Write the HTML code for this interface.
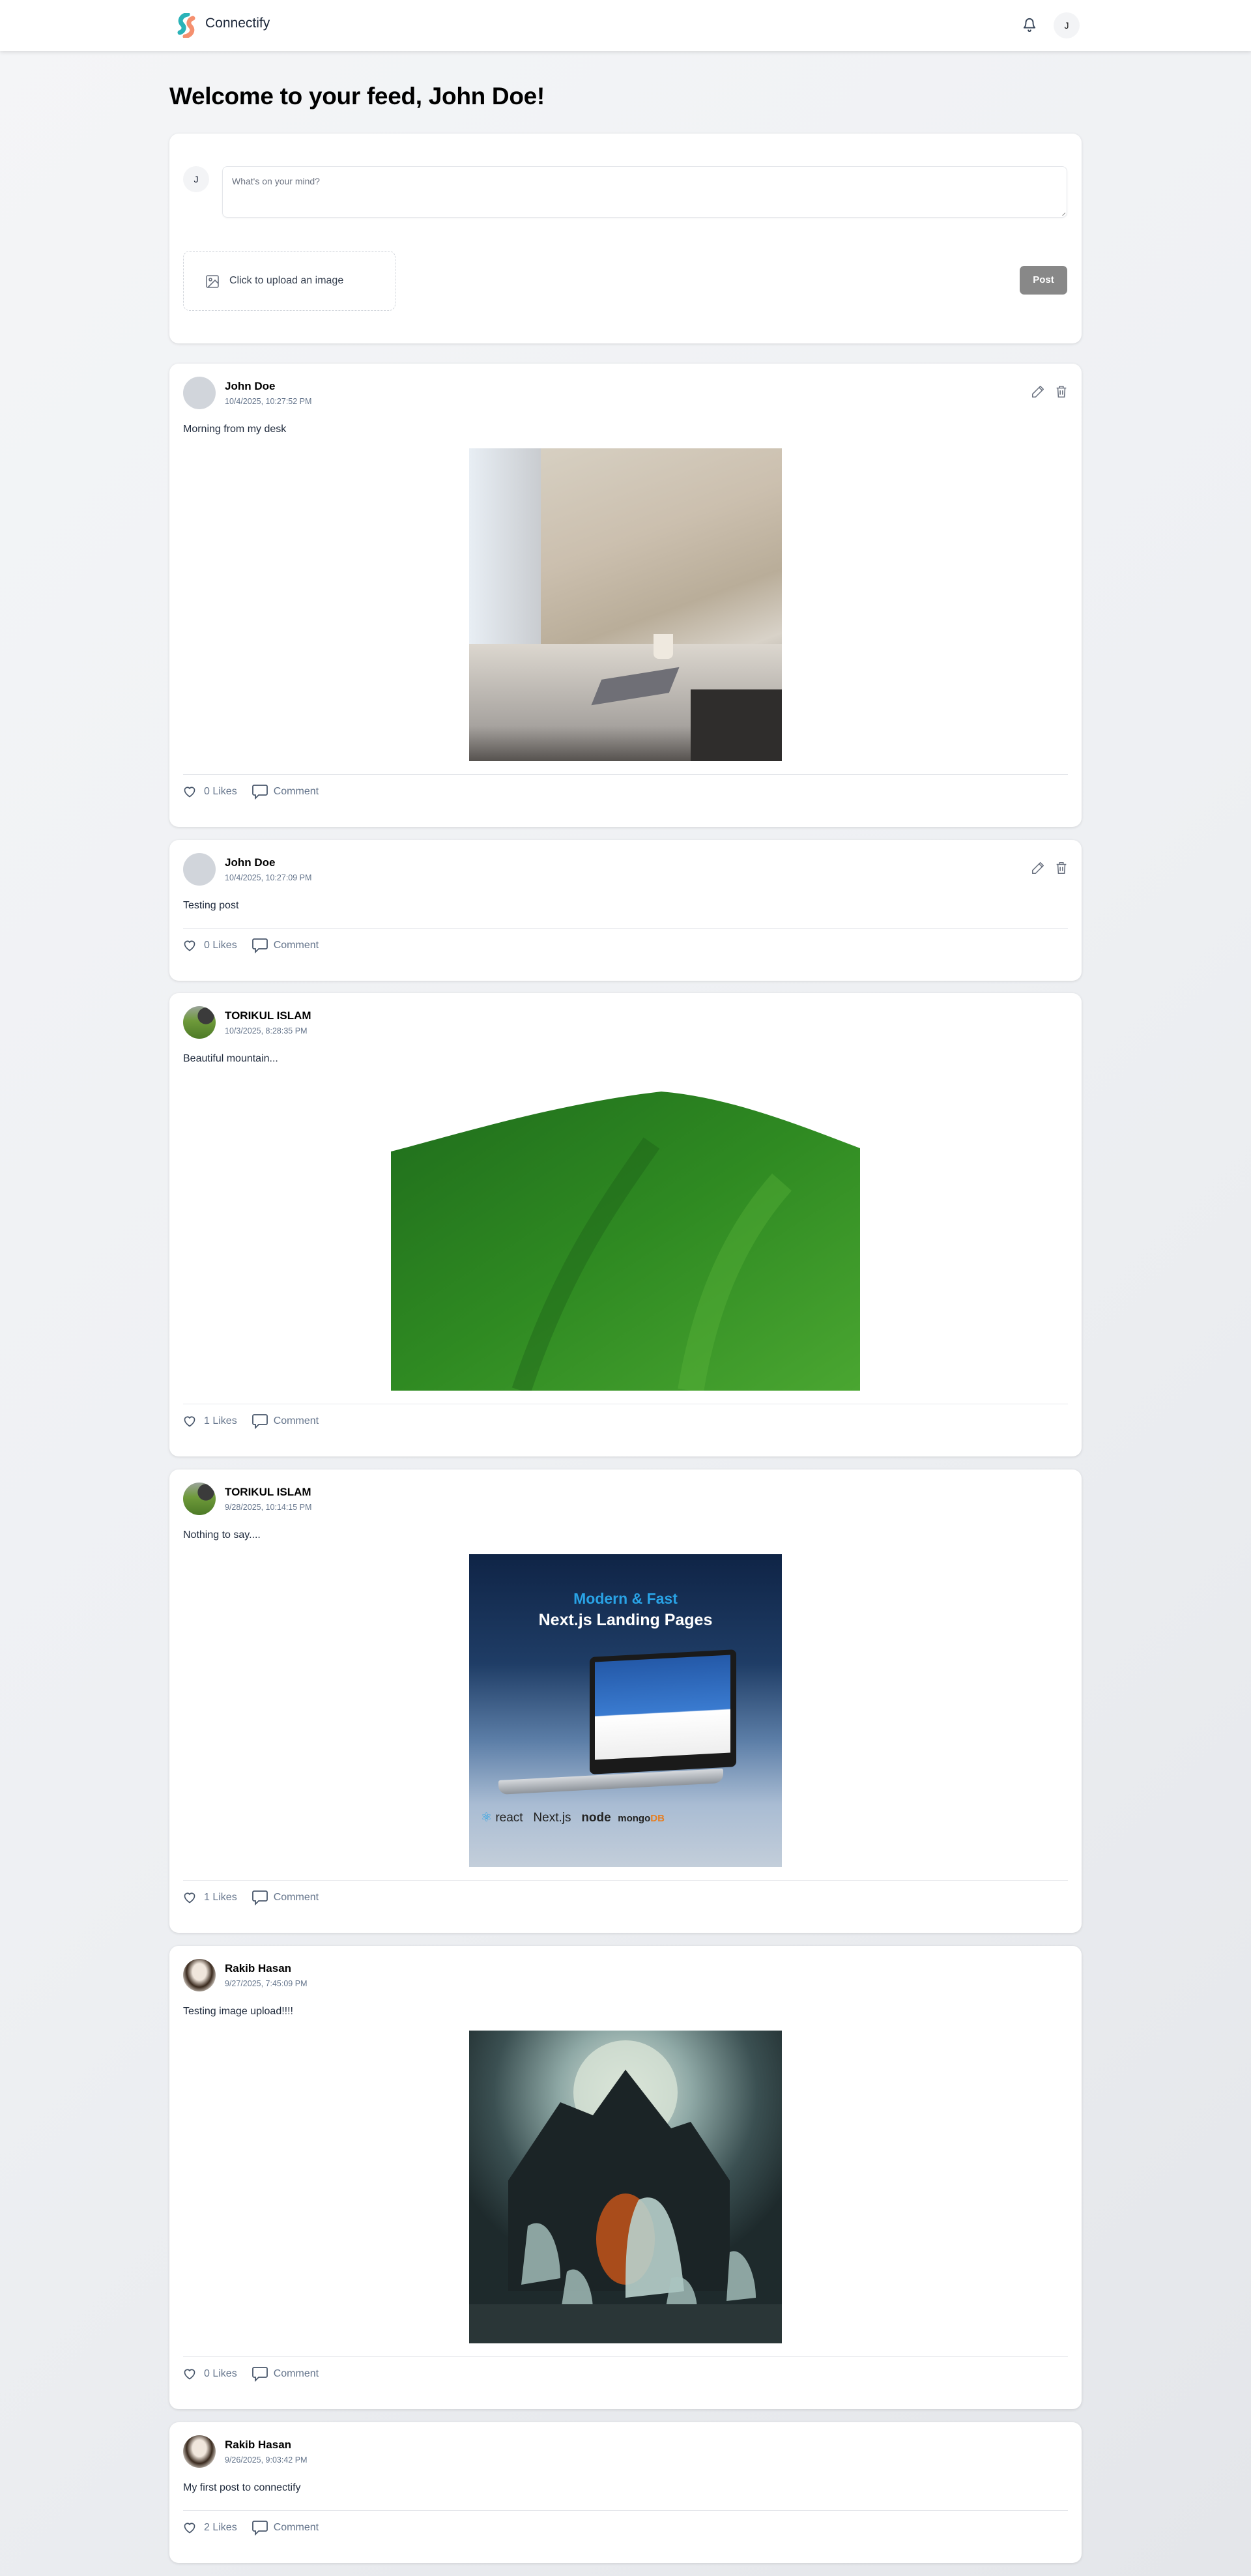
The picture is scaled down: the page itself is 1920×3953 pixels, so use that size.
<!DOCTYPE html>
<html><head><meta charset="utf-8">
<style>
*{box-sizing:border-box;margin:0;padding:0}
html,body{width:1920px;height:3953px;overflow:hidden}
body{font-family:"Segoe UI","Liberation Sans",sans-serif;background:linear-gradient(135deg,#f4f5f7 0%,#eef0f3 50%,#e4e6ea 100%);position:relative;color:#0f172a}
.nav{position:absolute;left:0;top:0;width:1920px;height:78px;background:#fff;box-shadow:0 2px 6px rgba(0,0,0,.12)}
.abs{position:absolute}
.card{position:absolute;left:260px;width:1400px;background:#fff;border-radius:14px;box-shadow:0 1px 4px rgba(0,0,0,.12)}
.av{position:absolute;left:21px;top:20px;width:50px;height:50px;border-radius:50%;background:#d1d5db;overflow:hidden}
.name{position:absolute;left:85px;top:25px;font-size:17px;font-weight:bold;color:#000}
.date{position:absolute;left:85px;top:51px;font-size:12.5px;color:#64748b}
.txt{position:absolute;left:21px;top:89px;font-size:16px;line-height:24px;color:#1e293b}
.img{position:absolute;top:130px;overflow:hidden}
.foot{position:absolute;left:21px;right:21px;border-top:1px solid #e5e7eb;height:60px}
.foot .r{position:absolute;top:14px;left:0;height:24px;display:flex;align-items:center;font-size:16px;color:#64748b}
.icons{position:absolute;right:20px;top:32px;display:flex;gap:14px}
</style></head><body>

<div class="nav">
  <svg class="abs" style="left:270px;top:20px" width="32" height="38" viewBox="0 0 32 38">
    <path d="M18 2 C8 4 4 12 10 18 C14 22 12 28 6 30" stroke="#2bb3b8" stroke-width="7" fill="none" stroke-linecap="round"/>
    <path d="M14 36 C24 34 28 26 22 20 C18 16 20 10 26 8" stroke="#f4845f" stroke-width="7" fill="none" stroke-linecap="round" opacity=".9"/>
  </svg>
  <div class="abs" style="left:315px;top:24px;font-size:21px;color:#1e293b">Connectify</div>
  <svg class="abs" style="left:1569px;top:25px" width="22" height="26" viewBox="0 0 24 26" fill="none" stroke="#334155" stroke-width="2" stroke-linecap="round" stroke-linejoin="round"><path d="M6 9a6 6 0 0 1 12 0c0 7 3 9 3 9H3s3-2 3-9"/><path d="M10 22a2 2 0 0 0 4 0"/></svg>
  <div class="abs" style="left:1617px;top:19px;width:40px;height:40px;border-radius:50%;background:#f3f4f6;text-align:center;line-height:40px;font-size:14px;color:#111">J</div>
</div>

<div class="abs" style="left:260px;top:127px;font-size:37px;font-weight:bold;color:#000;letter-spacing:-0.3px">Welcome to your feed, John Doe!</div>

<div class="card" style="top:205px;height:322px">
  <div class="abs" style="left:21px;top:50px;width:40px;height:40px;border-radius:50%;background:#f3f4f6;text-align:center;line-height:40px;font-size:14px">J</div>
  <div class="abs" style="left:81px;top:50px;width:1297px;height:79px;border:1px solid #e5e7eb;border-radius:8px;box-shadow:0 1px 2px rgba(0,0,0,.05)">
    <div class="abs" style="left:14px;top:14px;font-size:14px;color:#6b7280">What's on your mind?</div>
    <div class="abs" style="right:3px;bottom:3px;width:6px;height:6px;border-right:1px solid #888;transform:rotate(45deg)"></div>
  </div>
  <div class="abs" style="left:21px;top:180px;width:326px;height:92px;border:1.5px dashed #d1d5db;border-radius:10px">
    <svg class="abs" style="left:32px;top:34px" width="24" height="24" viewBox="0 0 24 24" fill="none" stroke="#6b7280" stroke-width="1.6"><rect x="3" y="3" width="18" height="18" rx="2"/><circle cx="9" cy="9" r="2"/><path d="M21 15l-5-5L5 21"/></svg>
    <div class="abs" style="left:70px;top:36px;font-size:16px;color:#374151;font-weight:500">Click to upload an image</div>
  </div>
  <div class="abs" style="left:1305px;top:203px;width:73px;height:44px;border-radius:7px;background:#888;color:#fff;font-weight:bold;font-size:15px;text-align:center;line-height:44px">Post</div>
</div>

<!-- Post 1 -->
<div class="card" style="top:558px;height:711px">
  <div class="av"></div>
  <div class="name">John Doe</div><div class="date">10/4/2025, 10:27:52 PM</div>
  <div class="icons"><svg width="22" height="22" viewBox="0 0 24 24" fill="none" stroke="#6b7280" stroke-width="1.7" stroke-linejoin="round"><path d="M16 3l5 5L8 21H3v-5z"/><path d="M14 5l5 5"/></svg><svg width="22" height="22" viewBox="0 0 24 24" fill="none" stroke="#6b7280" stroke-width="1.7"><path d="M4 6h16M9 6V3h6v3M6 6l1 15h10l1-15M10 10v7M14 10v7"/></svg></div>
  <div class="txt">Morning from my desk</div>
  <div class="img" style="left:460px;width:480px;height:480px;background:linear-gradient(160deg,#d9d3c6 0%,#cbbfae 35%,#b9ad99 55%,#d8d2c8 70%,#6e6a66 100%)">
    <div class="abs" style="left:0;top:0;width:110px;height:300px;background:linear-gradient(90deg,#e8eef4,#c9ccd0)"></div>
    <div class="abs" style="left:0;top:300px;width:480px;height:180px;background:linear-gradient(180deg,#dcd7cf,#a7a39f 70%,#56524f)"></div>
    <div class="abs" style="right:0;top:370px;width:140px;height:110px;background:#2f2d2c"></div>
    <div class="abs" style="left:200px;top:345px;width:110px;height:40px;background:#6f6f76;transform:skew(-30deg) rotate(-10deg)"></div>
    <div class="abs" style="left:283px;top:285px;width:30px;height:38px;background:#efe9df;border-radius:0 0 8px 8px"></div>
  </div>
  <div class="foot" style="top:630px"><div class="r">
    <svg width="20" height="20" viewBox="0 0 24 24" fill="none" stroke="#475569" stroke-width="2"><path d="M12 21s-9-5.5-9-12a5 5 0 0 1 9-3 5 5 0 0 1 9 3c0 6.5-9 12-9 12z"/></svg>
    <span style="margin-left:12px">0 Likes</span>
    <svg style="margin-left:22px" width="26" height="24" viewBox="0 0 26 24" fill="none" stroke="#475569" stroke-width="1.8"><path d="M4 2h18a2 2 0 0 1 2 2v11a2 2 0 0 1-2 2H11l-5 5v-5H4a2 2 0 0 1-2-2V4a2 2 0 0 1 2-2z"/></svg>
    <span style="margin-left:8px">Comment</span></div></div>
</div>

<!-- Post 2 -->
<div class="card" style="top:1289px;height:216px">
  <div class="av"></div>
  <div class="name">John Doe</div><div class="date">10/4/2025, 10:27:09 PM</div>
  <div class="icons"><svg width="22" height="22" viewBox="0 0 24 24" fill="none" stroke="#6b7280" stroke-width="1.7" stroke-linejoin="round"><path d="M16 3l5 5L8 21H3v-5z"/><path d="M14 5l5 5"/></svg><svg width="22" height="22" viewBox="0 0 24 24" fill="none" stroke="#6b7280" stroke-width="1.7"><path d="M4 6h16M9 6V3h6v3M6 6l1 15h10l1-15M10 10v7M14 10v7"/></svg></div>
  <div class="txt">Testing post</div>
  <div class="foot" style="top:135px"><div class="r">
    <svg width="20" height="20" viewBox="0 0 24 24" fill="none" stroke="#475569" stroke-width="2"><path d="M12 21s-9-5.5-9-12a5 5 0 0 1 9-3 5 5 0 0 1 9 3c0 6.5-9 12-9 12z"/></svg>
    <span style="margin-left:12px">0 Likes</span>
    <svg style="margin-left:22px" width="26" height="24" viewBox="0 0 26 24" fill="none" stroke="#475569" stroke-width="1.8"><path d="M4 2h18a2 2 0 0 1 2 2v11a2 2 0 0 1-2 2H11l-5 5v-5H4a2 2 0 0 1-2-2V4a2 2 0 0 1 2-2z"/></svg>
    <span style="margin-left:8px">Comment</span></div></div>
</div>

<!-- Post 3 -->
<div class="card" style="top:1524px;height:711px">
  <div class="av" style="background:radial-gradient(circle at 70% 30%,#3b3b3b 0 25%,transparent 26%),linear-gradient(180deg,#9aa39a 0%,#6e9a3a 45%,#4d7a27 100%)"></div>
  <div class="name">TORIKUL ISLAM</div><div class="date">10/3/2025, 8:28:35 PM</div>
  <div class="txt">Beautiful mountain...</div>
  <svg class="img" style="left:340px" width="720" height="480" viewBox="0 0 720 480">
    <defs><linearGradient id="g1" x1="0" y1="0" x2="1" y2="1"><stop offset="0" stop-color="#1f6d1c"/><stop offset=".5" stop-color="#2f8a22"/><stop offset="1" stop-color="#4aa631"/></linearGradient></defs>
    <path d="M0 113 C90 90 250 40 415 21 C520 30 620 70 720 108 L720 480 L0 480Z" fill="url(#g1)"/>
    <path d="M200 480 C260 300 330 200 400 100" stroke="#1b5a18" stroke-width="30" fill="none" opacity=".35"/>
    <path d="M460 480 C480 360 520 250 600 160" stroke="#5fb83c" stroke-width="40" fill="none" opacity=".35"/>
  </svg>
  <div class="foot" style="top:630px"><div class="r">
    <svg width="20" height="20" viewBox="0 0 24 24" fill="none" stroke="#475569" stroke-width="2"><path d="M12 21s-9-5.5-9-12a5 5 0 0 1 9-3 5 5 0 0 1 9 3c0 6.5-9 12-9 12z"/></svg>
    <span style="margin-left:12px">1 Likes</span>
    <svg style="margin-left:22px" width="26" height="24" viewBox="0 0 26 24" fill="none" stroke="#475569" stroke-width="1.8"><path d="M4 2h18a2 2 0 0 1 2 2v11a2 2 0 0 1-2 2H11l-5 5v-5H4a2 2 0 0 1-2-2V4a2 2 0 0 1 2-2z"/></svg>
    <span style="margin-left:8px">Comment</span></div></div>
</div>

<!-- Post 4 -->
<div class="card" style="top:2255px;height:711px">
  <div class="av" style="background:radial-gradient(circle at 70% 30%,#3b3b3b 0 25%,transparent 26%),linear-gradient(180deg,#9aa39a 0%,#6e9a3a 45%,#4d7a27 100%)"></div>
  <div class="name">TORIKUL ISLAM</div><div class="date">9/28/2025, 10:14:15 PM</div>
  <div class="txt">Nothing to say....</div>
  <div class="img" style="left:460px;width:480px;height:480px;background:linear-gradient(180deg,#0f2446 0%,#1f3d66 35%,#5d7fa8 60%,#a9bcd3 80%,#c3ceda 100%)">
    <div class="abs" style="left:0;width:480px;top:55px;text-align:center;font-family:'Liberation Sans',sans-serif;font-weight:bold;font-size:23px;color:#29a3e6">Modern &amp; Fast</div>
    <div class="abs" style="left:0;width:480px;top:87px;text-align:center;font-family:'Liberation Sans',sans-serif;font-weight:bold;font-size:25px;color:#fff">Next.js Landing Pages</div>
    <div class="abs" style="left:185px;top:152px;width:225px;height:180px;background:#1a1a1a;border-radius:8px;transform:skewY(-3deg)"></div>
    <div class="abs" style="left:193px;top:160px;width:208px;height:150px;background:linear-gradient(180deg,#2459a8 0%,#3a7bd0 55%,#fff 56%,#eee 100%);transform:skewY(-3deg)"></div>
    <div class="abs" style="left:45px;top:338px;width:345px;height:22px;background:linear-gradient(180deg,#d6d9dd,#8e949b);border-radius:3px 3px 14px 14px;transform:skewY(-3deg)"></div>
    <div class="abs" style="left:18px;top:393px;font-family:'Liberation Sans',sans-serif;font-size:19px;color:#222"><span style="color:#29a3e6">⚛</span> react &nbsp;&nbsp;Next.js &nbsp;&nbsp;<b>node</b> &nbsp;<b style="font-size:15px">mongo<span style="color:#e67e22">DB</span></b></div>
  </div>
  <div class="foot" style="top:630px"><div class="r">
    <svg width="20" height="20" viewBox="0 0 24 24" fill="none" stroke="#475569" stroke-width="2"><path d="M12 21s-9-5.5-9-12a5 5 0 0 1 9-3 5 5 0 0 1 9 3c0 6.5-9 12-9 12z"/></svg>
    <span style="margin-left:12px">1 Likes</span>
    <svg style="margin-left:22px" width="26" height="24" viewBox="0 0 26 24" fill="none" stroke="#475569" stroke-width="1.8"><path d="M4 2h18a2 2 0 0 1 2 2v11a2 2 0 0 1-2 2H11l-5 5v-5H4a2 2 0 0 1-2-2V4a2 2 0 0 1 2-2z"/></svg>
    <span style="margin-left:8px">Comment</span></div></div>
</div>

<!-- Post 5 -->
<div class="card" style="top:2986px;height:711px">
  <div class="av" style="background:radial-gradient(ellipse at 50% 40%,#f0e6dc 0 30%,#3a2a1e 55%,#e8e2da 80%)"></div>
  <div class="name">Rakib Hasan</div><div class="date">9/27/2025, 7:45:09 PM</div>
  <div class="txt">Testing image upload!!!!</div>
  <svg class="img" style="left:460px" width="480" height="480" viewBox="0 0 480 480">
    <defs><radialGradient id="moon" cx="0.5" cy="0.2" r="0.6"><stop offset="0" stop-color="#dfe9df"/><stop offset=".35" stop-color="#8fa9a6"/><stop offset=".7" stop-color="#3b5052"/><stop offset="1" stop-color="#1e2a2c"/></radialGradient></defs>
    <rect width="480" height="480" fill="url(#moon)"/>
    <circle cx="240" cy="95" r="80" fill="#d8e4d6" opacity=".8"/>
    <path d="M60 230 L140 110 L190 130 L240 60 L310 150 L340 140 L400 230 L400 400 L60 400Z" fill="#1b2426"/>
    <ellipse cx="240" cy="320" rx="45" ry="70" fill="#c2531a" opacity=".85"/>
    <path d="M260 260 C300 240 320 300 330 400 L240 410 C240 350 240 300 260 260Z" fill="#b8d0cc" opacity=".9"/>
    <path d="M90 300 C120 280 140 330 140 380 L80 390Z" fill="#a9c4c0" opacity=".8"/>
    <path d="M150 370 C170 355 190 390 190 430 L140 435Z" fill="#a9c4c0" opacity=".8"/>
    <path d="M310 380 C335 370 350 400 350 430 L300 435Z" fill="#a9c4c0" opacity=".8"/>
    <path d="M400 340 C420 330 440 370 440 410 L395 415Z" fill="#a9c4c0" opacity=".8"/>
    <rect x="0" y="420" width="480" height="60" fill="#2a3637"/>
  </svg>
  <div class="foot" style="top:630px"><div class="r">
    <svg width="20" height="20" viewBox="0 0 24 24" fill="none" stroke="#475569" stroke-width="2"><path d="M12 21s-9-5.5-9-12a5 5 0 0 1 9-3 5 5 0 0 1 9 3c0 6.5-9 12-9 12z"/></svg>
    <span style="margin-left:12px">0 Likes</span>
    <svg style="margin-left:22px" width="26" height="24" viewBox="0 0 26 24" fill="none" stroke="#475569" stroke-width="1.8"><path d="M4 2h18a2 2 0 0 1 2 2v11a2 2 0 0 1-2 2H11l-5 5v-5H4a2 2 0 0 1-2-2V4a2 2 0 0 1 2-2z"/></svg>
    <span style="margin-left:8px">Comment</span></div></div>
</div>

<!-- Post 6 -->
<div class="card" style="top:3717px;height:216px">
  <div class="av" style="background:radial-gradient(ellipse at 50% 40%,#f0e6dc 0 30%,#3a2a1e 55%,#e8e2da 80%)"></div>
  <div class="name">Rakib Hasan</div><div class="date">9/26/2025, 9:03:42 PM</div>
  <div class="txt">My first post to connectify</div>
  <div class="foot" style="top:135px"><div class="r">
    <svg width="20" height="20" viewBox="0 0 24 24" fill="none" stroke="#475569" stroke-width="2"><path d="M12 21s-9-5.5-9-12a5 5 0 0 1 9-3 5 5 0 0 1 9 3c0 6.5-9 12-9 12z"/></svg>
    <span style="margin-left:12px">2 Likes</span>
    <svg style="margin-left:22px" width="26" height="24" viewBox="0 0 26 24" fill="none" stroke="#475569" stroke-width="1.8"><path d="M4 2h18a2 2 0 0 1 2 2v11a2 2 0 0 1-2 2H11l-5 5v-5H4a2 2 0 0 1-2-2V4a2 2 0 0 1 2-2z"/></svg>
    <span style="margin-left:8px">Comment</span></div></div>
</div>

</body></html>
